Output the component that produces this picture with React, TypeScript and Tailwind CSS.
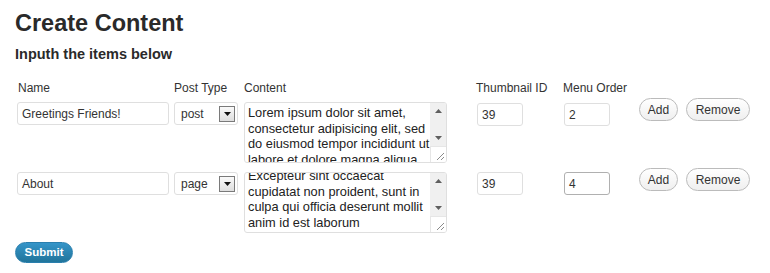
import React from 'react';

const rows = [
  {
    name: 'Greetings Friends!',
    type: 'post',
    lines: [
      'Lorem ipsum dolor sit amet,',
      'consectetur adipisicing elit, sed',
      'do eiusmod tempor incididunt ut',
      'labore et dolore magna aliqua.',
    ],
    scrolled: false,
    thumb: '39',
    order: '2',
    focused: false,
  },
  {
    name: 'About',
    type: 'page',
    lines: [
      'Excepteur sint occaecat',
      'cupidatat non proident, sunt in',
      'culpa qui officia deserunt mollit',
      'anim id est laborum',
    ],
    scrolled: true,
    thumb: '39',
    order: '4',
    focused: true,
  },
];

function Arrow({ up }: { up?: boolean }) {
  return (
    <svg width="7" height="4" viewBox="0 0 7 4">
      <path d={up ? 'M0 4 L3.5 0 L7 4 Z' : 'M0 0 L7 0 L3.5 4 Z'} fill="#5f5f5f" />
    </svg>
  );
}

function Scrollbar() {
  return (
    <div className="flex w-[16px] flex-col bg-[#f0f0f0]">
      <div className="flex h-[16px] items-center justify-center">
        <Arrow up />
      </div>
      <div className="flex-1" />
      <div className="flex h-[16px] items-center justify-center">
        <Arrow />
      </div>
      <div className="flex h-[16px] items-end justify-end border-t border-l border-[#e6e6e6] bg-white p-[2px]">
        <svg width="8" height="8" viewBox="0 0 8 8">
          <path d="M1 8 L8 1 M5 8 L8 5" stroke="#8a8a8a" strokeWidth="1" />
        </svg>
      </div>
    </div>
  );
}

function FakeTextarea({ lines, scrolled }: { lines: string[]; scrolled: boolean }) {
  return (
    <div className="flex h-[61px] w-[203px] overflow-hidden rounded-[3px] border border-[#dfdfdf] bg-white">
      <div className="flex-1 overflow-hidden px-[3px] text-[12.8px] leading-[15.6px] text-[#222]">
        <div className={scrolled ? '-mt-[5px]' : 'mt-[2px]'}>
          {lines.map((l) => (
            <div key={l} className="whitespace-nowrap">
              {l}
            </div>
          ))}
        </div>
      </div>
      <Scrollbar />
    </div>
  );
}

function PillButton({ label, w }: { label: string; w: string }) {
  return (
    <button
      className={`${w} h-[23px] rounded-full border border-[#bbbbbb] bg-gradient-to-b from-white to-[#efefef] text-[12px] text-[#333]`}
    >
      {label}
    </button>
  );
}

export default function App() {
  return (
    <div className="h-[273px] w-[770px] bg-white font-['Liberation_Sans',Arial,sans-serif] text-[#333]">
      <h2 className="pl-[15px] pt-[9px] text-[23.5px] font-bold leading-[29px] text-[#2a2a2a]">Create Content</h2>
      <h3 className="mt-[7px] pl-[15px] text-[14.5px] font-bold leading-[18px] text-[#2a2a2a]">Inputh the items below</h3>

      <div className="ml-[17px] mt-[18px] grid grid-cols-[157px_70px_233px_87px_75px_auto] text-[12px] leading-[14px]">
        <div className="pl-[1px]">Name</div>
        <div>Post Type</div>
        <div>Content</div>
        <div className="-ml-[1px]">Thumbnail ID</div>
        <div className="-ml-[1px]">Menu Order</div>
        <div />

        {rows.map((r, i) => (
          <React.Fragment key={r.name}>
            <div className={i === 0 ? 'pt-[7px]' : 'pt-[9px]'}>
              <div className="flex h-[23px] w-[152px] items-center rounded-[3px] border border-[#dfdfdf] px-[4px] text-[12px]">
                {r.name}
              </div>
            </div>
            <div className={i === 0 ? 'pt-[7px]' : 'pt-[9px]'}>
              <div className="flex h-[23px] w-[64px] items-center justify-between rounded-[3px] border border-[#dfdfdf] pl-[6px] pr-[2px] text-[12px]">
                <span>{r.type}</span>
                <div className="flex h-[16px] w-[16px] items-center justify-center border border-[#7a7a7a] bg-gradient-to-b from-[#fafafa] to-[#dedede]">
                  <svg width="7" height="4" viewBox="0 0 7 4">
                    <path d="M0 0 L7 0 L3.5 4 Z" fill="#111" />
                  </svg>
                </div>
              </div>
            </div>
            <div className={i === 0 ? 'pt-[7px]' : 'pt-[9px]'}>
              <FakeTextarea lines={r.lines} scrolled={r.scrolled} />
            </div>
            <div className={i === 0 ? 'pt-[8px]' : 'pt-[9px]'}>
              <div className="flex h-[23px] w-[46px] items-center rounded-[3px] border border-[#dfdfdf] px-[4px] text-[12px]">
                {r.thumb}
              </div>
            </div>
            <div className={i === 0 ? 'pt-[8px]' : 'pt-[9px]'}>
              <div
                className={`flex h-[23px] w-[46px] items-center rounded-[3px] border px-[4px] text-[12px] ${
                  r.focused ? 'border-[#b0b0b0]' : 'border-[#dfdfdf]'
                }`}
              >
                {r.order}
              </div>
            </div>
            <div className={`flex gap-[8px] ${i === 0 ? 'pt-[3px]' : 'pt-[5px]'}`}>
              <PillButton label="Add" w="w-[39px]" />
              <PillButton label="Remove" w="w-[64px]" />
            </div>
          </React.Fragment>
        ))}
      </div>

      <button className="ml-[15px] mt-[9px] h-[21px] w-[58px] rounded-full border border-[#2a7fae] bg-gradient-to-b from-[#3595c9] to-[#21759b] text-[11.5px] font-bold leading-none text-white">
        Submit
      </button>
    </div>
  );
}
